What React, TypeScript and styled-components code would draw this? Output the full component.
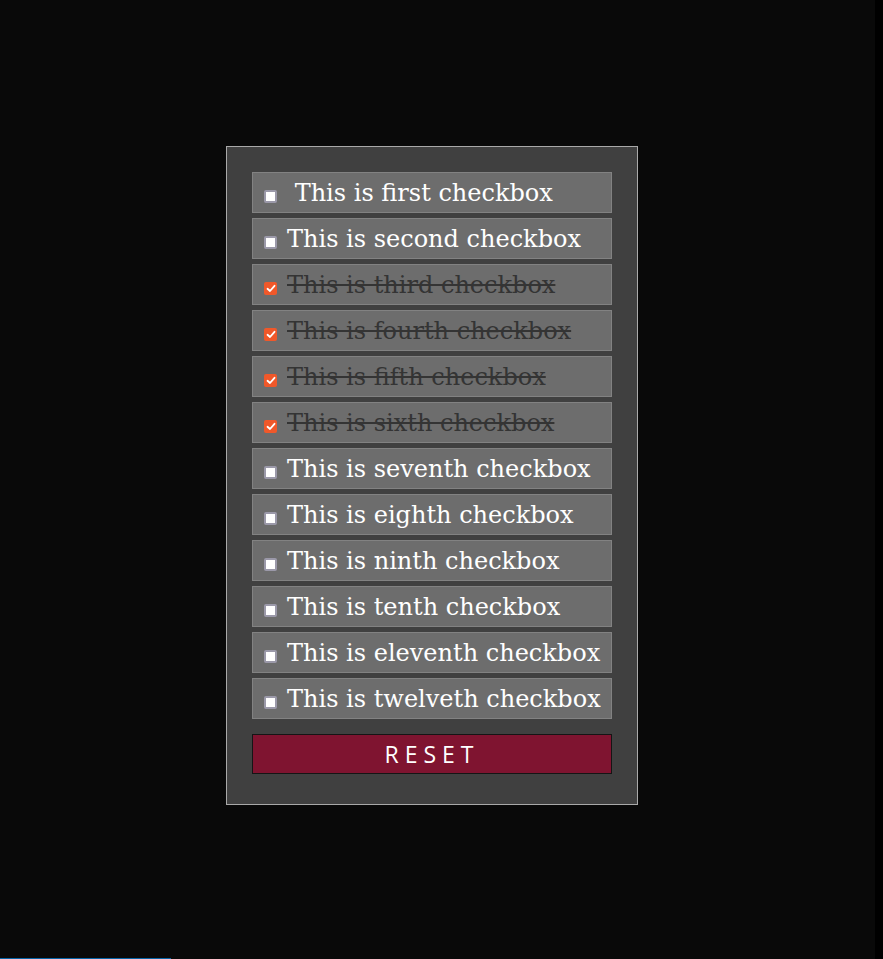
import React, { useState } from "react";
import styled, { createGlobalStyle } from "styled-components";

const Global = createGlobalStyle`
  html, body { margin: 0; padding: 0; background: #000; }
  body { font-family: "DejaVu Serif", serif; }
`;

const Page = styled.div`
  width: 875px;
  min-height: 959px;
  background: #090909;
  box-sizing: border-box;
  padding: 146px 0 0 226px;
`;

const Panel = styled.div`
  width: 412px;
  box-sizing: border-box;
  background: #404040;
  border: 1px solid #a9a9a9;
  padding: 25px 25px 30px 25px;
  display: flex;
  flex-direction: column;
  gap: 5px;
`;

const Row = styled.label<{ $checked: boolean }>`
  height: 41px;
  box-sizing: border-box;
  background: #6d6d6d;
  border: 1px solid #828282;
  display: flex;
  align-items: center;
  padding-left: 11px;
  font-family: "DejaVu Serif", serif;
  font-size: 24px;
  white-space: pre;
  color: ${(p) => (p.$checked ? "#343434" : "#ffffff")};
  text-decoration: ${(p) => (p.$checked ? "line-through" : "none")};
  cursor: pointer;
`;

const Box = styled.span<{ $checked: boolean }>`
  width: 13px;
  height: 13px;
  box-sizing: border-box;
  margin-top: 8px;
  margin-right: 10px;
  flex: none;
  border-radius: 2px;
  display: flex;
  align-items: center;
  justify-content: center;
  background: ${(p) => (p.$checked ? "#f0582a" : "#ffffff")};
  border: ${(p) => (p.$checked ? "none" : "2px solid #9b99a9")};
`;

const Reset = styled.button`
  margin-top: 10px;
  height: 40px;
  background: #7f1430;
  border: 1px solid #151515;
  color: #ffffff;
  font-family: "Open Sans", sans-serif;
  font-size: 23px;
  letter-spacing: 6px;
  padding: 0;
  cursor: pointer;
`;

const BlueBar = styled.div`
  position: fixed;
  left: 0;
  bottom: 0;
  width: 171px;
  height: 1px;
  background: #0563a6;
`;

const labels = [
  " This is first checkbox",
  "This is second checkbox",
  "This is third checkbox",
  "This is fourth checkbox",
  "This is fifth checkbox",
  "This is sixth checkbox",
  "This is seventh checkbox",
  "This is eighth checkbox",
  "This is ninth checkbox",
  "This is tenth checkbox",
  "This is eleventh checkbox",
  "This is twelveth checkbox",
];

const initial = labels.map((_, i) => i >= 2 && i <= 5);

export default function App() {
  const [checked, setChecked] = useState<boolean[]>(initial);
  return (
    <>
      <Global />
      <Page>
        <Panel>
          {labels.map((l, i) => (
            <Row
              key={i}
              $checked={checked[i]}
              onClick={() =>
                setChecked((c) => c.map((v, j) => (j === i ? !v : v)))
              }
            >
              <Box $checked={checked[i]}>
                {checked[i] && (
                  <svg width="10" height="9" viewBox="0 0 10 9">
                    <path
                      d="M1.5 4.8 L4 7 L8.5 1.8"
                      fill="none"
                      stroke="#fff"
                      strokeWidth="1.8"
                      strokeLinecap="round"
                      strokeLinejoin="round"
                    />
                  </svg>
                )}
              </Box>
              {l}
            </Row>
          ))}
          <Reset onClick={() => setChecked(labels.map(() => false))}>RESET</Reset>
        </Panel>
      </Page>
      <BlueBar />
    </>
  );
}
